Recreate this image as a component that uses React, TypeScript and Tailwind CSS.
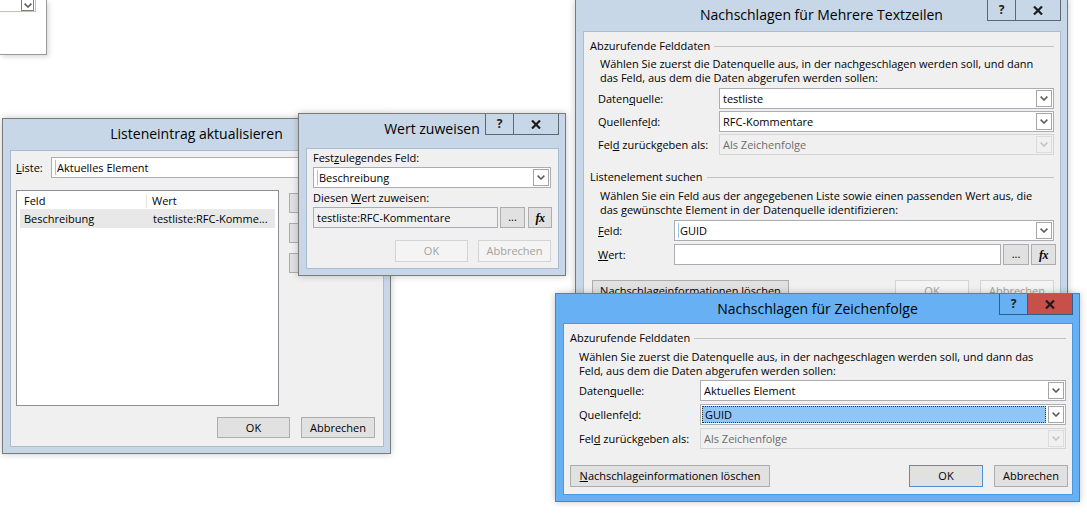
import React from "react";

function Chevron({ muted = false }: { muted?: boolean }) {
  return (
    <svg width="8" height="5" viewBox="0 0 8 5">
      <path d="M0.6 0.6 L4 4 L7.4 0.6" fill="none" stroke={muted ? "#c4c4c4" : "#5a5a5a"} strokeWidth="1.5" />
    </svg>
  );
}

function XGlyph() {
  return (
    <svg width="10" height="9" viewBox="0 0 10 9">
      <path d="M1 0.5 L9 8.5 M9 0.5 L1 8.5" stroke="#1c1c1c" strokeWidth="2.2" />
    </svg>
  );
}

function Caption({ active }: { active: boolean }) {
  return (
    <div className={`absolute top-0 right-[6px] flex h-[21px] border-l border-r border-b ${active ? "border-[#2f5f8e]" : "border-[#5c6772]"}`}>
      <div className={`w-[28px] flex items-center justify-center border-r font-bold text-[12px] text-[#1c1c1c] ${active ? "border-[#2f5f8e]" : "border-[#5c6772]"}`}>
        ?
      </div>
      <div className={`w-[44px] flex items-center justify-center ${active ? "bg-[#c7504b]" : ""}`}>
        <XGlyph />
      </div>
    </div>
  );
}

function Win({
  pos,
  bar,
  title,
  active = false,
  children,
}: {
  pos: string;
  bar: string;
  title: string;
  active?: boolean;
  children: React.ReactNode;
}) {
  return (
    <div
      className={`absolute flex flex-col border shadow-[0_0_7px_rgba(0,0,0,0.22)] ${
        active ? "border-[#3f86cb] bg-[#66b0f3]" : "border-[#7a7a7a] bg-[#c7d7e7]"
      } ${pos}`}
    >
      <div className={`relative shrink-0 flex justify-center pt-[5px] ${bar}`}>
        <span className="text-[14px] leading-[20px] text-black">{title}</span>
        <Caption active={active} />
      </div>
      <div
        className={`relative flex-1 min-h-0 overflow-hidden ml-[7px] mr-[6px] mb-[6px] border bg-[#f0f0f0] ${
          active ? "border-[#4d98dd]" : "border-[#aabdd0]"
        }`}
      >
        {children}
      </div>
    </div>
  );
}

function Combo({
  value,
  className,
  disabled = false,
  selected = false,
  caret = false,
}: {
  value: string;
  className: string;
  disabled?: boolean;
  selected?: boolean;
  caret?: boolean;
}) {
  return (
    <div
      className={`flex items-center h-[21px] border ${
        disabled ? "border-[#d5d5d5] bg-[#f0f0f0] text-[#6d6d6d]" : "border-[#abadb3] bg-white"
      } ${className}`}
    >
      <div className="flex-1 min-w-0 h-full flex items-center p-[1px]">
        {selected ? (
          <div className="flex-1 h-full flex items-center pl-[2px] bg-[#8fc6f6] border border-dotted border-[#333]">
            {value}
          </div>
        ) : (
          <div className="flex items-center h-full pl-[2px]">
            {caret && <span className="w-px h-[15px] bg-[#9dc3e8] mr-[1px]" />}
            {value}
          </div>
        )}
      </div>
      <div
        className={`w-[16px] h-[17px] mr-[1px] ml-[1px] border flex items-center justify-center ${
          disabled ? "border-[#dcdcdc]" : "border-[#a6a6a6]"
        }`}
      >
        <Chevron muted={disabled} />
      </div>
    </div>
  );
}

function TextBox({
  value = "",
  className,
  readOnly = false,
  caret = false,
}: {
  value?: string;
  className: string;
  readOnly?: boolean;
  caret?: boolean;
}) {
  return (
    <div
      className={`flex items-center h-[21px] border border-[#abadb3] pl-[3px] ${readOnly ? "bg-[#f0f0f0]" : "bg-white"} ${className}`}
    >
      {caret && <span className="w-px h-[15px] bg-[#9dc3e8] mr-[1px]" />}
      {value}
    </div>
  );
}

function Btn({
  children,
  className,
  disabled = false,
  def = false,
}: {
  children?: React.ReactNode;
  className: string;
  disabled?: boolean;
  def?: boolean;
}) {
  return (
    <div
      className={`flex items-center justify-center border ${
        disabled
          ? "border-[#d4d4d4] bg-[#f4f4f4] text-[#a3a3a3]"
          : def
          ? "border-[#4f8fd0] bg-[#e1e1e1]"
          : "border-[#adadad] bg-[#e1e1e1]"
      } ${className}`}
    >
      {children}
    </div>
  );
}

function SmallBtns({ dots, fx }: { dots: string; fx: string }) {
  return (
    <>
      <Btn className={`h-[21px] items-end pb-[3px] ${dots}`}>...</Btn>
      <Btn className={`h-[21px] ${fx}`}>
        <span className="font-['Liberation_Serif',serif] italic font-bold text-[12px] tracking-[-0.5px]">fx</span>
      </Btn>
    </>
  );
}

function Group({ label, className }: { label: string; className: string }) {
  return (
    <div className={`flex items-center h-[14px] ${className}`}>
      <span>{label}</span>
      <div className="flex-1 ml-[4px] h-0 border-t border-[#c2c2c2]" />
    </div>
  );
}

function Fragment() {
  return (
    <div className="absolute left-0 top-0 w-[47px] h-[55px] bg-white border-r border-b border-[#9a9a9a] shadow-[2px_2px_5px_rgba(0,0,0,0.15)]">
      <div className="flex justify-end w-[36px] h-[12px] border-b border-r border-[#a9c6e3]">
        <div className="w-[13px] h-[11px] mr-[1px] border-l border-r border-b border-[#7e7e7e] flex items-center justify-center">
          <Chevron />
        </div>
      </div>
    </div>
  );
}

function WinA() {
  return (
    <Win pos="left-[2px] top-[118px] w-[389px] h-[336px]" bar="h-[31px]" title="Listeneintrag aktualisieren">
      <div className="flex flex-col pl-[5px] pr-[8px]">
        <div className="mt-[6px] flex items-center h-[21px]">
          <span className="w-[35px]">
            <u>L</u>iste:
          </span>
          <TextBox className="flex-1" value="Aktuelles Element" caret />
        </div>
        <div className="mt-[12px] flex">
          <div className="w-[263px] h-[216px] border border-[#8c8e94] bg-white pt-[2px] px-[3px]">
            <div className="flex h-[17px] items-center border-b border-[#eaeaea]">
              <span className="w-[127px] pl-[4px] border-r border-[#e3e3e3]">Feld</span>
              <span className="pl-[5px]">Wert</span>
            </div>
            <div className="flex h-[18px] items-center bg-[#e8e8e8]">
              <span className="w-[127px] pl-[4px]">Beschreibung</span>
              <span className="pl-[6px]">testliste:RFC-Komme...</span>
            </div>
          </div>
          <div className="ml-[10px] flex-1 flex flex-col gap-[10px] pt-[3px]">
            <Btn className="h-[20px]" />
            <Btn className="h-[20px]" />
            <Btn className="h-[20px]" />
          </div>
        </div>
        <div className="mt-[11px] flex justify-end gap-[11px]">
          <Btn className="w-[73px] h-[21px]">OK</Btn>
          <Btn className="w-[74px] h-[21px]">Abbrechen</Btn>
        </div>
      </div>
    </Win>
  );
}

function WinB() {
  return (
    <Win pos="left-[298px] top-[113px] w-[268px] h-[163px]" bar="h-[34px]" title="Wert zuweisen">
      <div className="flex flex-col pl-[6px]">
        <div className="mt-[2px] h-[14px]">
          Fest<u>z</u>ulegendes Feld:
        </div>
        <Combo className="mt-[2px] w-[238px]" value="Beschreibung" caret />
        <div className="mt-[3px] h-[14px]">
          Diesen <u>W</u>ert zuweisen:
        </div>
        <div className="mt-[2px] flex">
          <TextBox className="w-[185px]" value="testliste:RFC-Kommentare" readOnly />
          <SmallBtns dots="ml-[2px] w-[25px]" fx="ml-[3px] w-[24px]" />
        </div>
        <div className="mt-[12px] w-[238px] flex justify-end gap-[10px]">
          <Btn className="w-[73px] h-[22px]" disabled>
            OK
          </Btn>
          <Btn className="w-[73px] h-[22px]" disabled>
            Abbrechen
          </Btn>
        </div>
      </div>
    </Win>
  );
}

function Row({ label, children, lw }: { label: React.ReactNode; children: React.ReactNode; lw: string }) {
  return (
    <div className="flex items-center">
      <span className={lw}>{label}</span>
      {children}
    </div>
  );
}

function WinC() {
  return (
    <Win pos="left-[575px] top-[-1px] w-[493px] h-[322px]" bar="h-[31px]" title="Nachschlagen für Mehrere Textzeilen">
      <div className="flex flex-col">
        <Group className="mt-[7px] ml-[6px] w-[464px]" label="Abzurufende Felddaten" />
        <div className="mt-[4px] pl-[16px]">
          Wählen Sie zuerst die Datenquelle aus, in der nachgeschlagen werden soll, und dann
          <br />
          das Feld, aus dem die Daten abgerufen werden sollen:
        </div>
        <div className="mt-[3px] pl-[14px] flex flex-col gap-[2px]">
          <Row lw="w-[121px]" label={<>Daten<u>q</u>uelle:</>}>
            <Combo className="w-[335px]" value="testliste" />
          </Row>
          <Row lw="w-[121px]" label={<>Quellenfe<u>l</u>d:</>}>
            <Combo className="w-[335px]" value="RFC-Kommentare" />
          </Row>
          <Row lw="w-[121px]" label={<>Fel<u>d</u> zurückgeben als:</>}>
            <Combo className="w-[335px]" value="Als Zeichenfolge" disabled />
          </Row>
        </div>
        <Group className="mt-[15px] ml-[6px] w-[464px]" label="Listenelement suchen" />
        <div className="mt-[5px] pl-[16px]">
          Wählen Sie ein Feld aus der angegebenen Liste sowie einen passenden Wert aus, die
          <br />
          das gewünschte Element in der Datenquelle identifizieren:
        </div>
        <div className="mt-[3px] pl-[14px] flex flex-col gap-[3px]">
          <Row lw="w-[76px]" label={<><u>F</u>eld:</>}>
            <Combo className="w-[380px]" value="GUID" caret />
          </Row>
          <Row lw="w-[76px]" label={<><u>W</u>ert:</>}>
            <TextBox className="w-[327px]" />
            <SmallBtns dots="ml-[2px] w-[26px]" fx="ml-[2px] w-[25px]" />
          </Row>
        </div>
        <div className="mt-[15px] pl-[8px] flex">
          <Btn className="w-[197px] h-[22px]">
            <span>
              Nachschlageinformationen löschen
            </span>
          </Btn>
          <Btn className="ml-[106px] w-[74px] h-[22px]" disabled>
            OK
          </Btn>
          <Btn className="ml-[11px] w-[74px] h-[22px]" disabled>
            Abbrechen
          </Btn>
        </div>
      </div>
    </Win>
  );
}

function WinD() {
  return (
    <Win pos="left-[555px] top-[293px] w-[525px] h-[209px]" bar="h-[29px]" title="Nachschlagen für Zeichenfolge" active>
      <div className="flex flex-col">
        <Group className="mt-[7px] ml-[6px] w-[496px]" label="Abzurufende Felddaten" />
        <div className="mt-[5px] pl-[15px]">
          Wählen Sie zuerst die Datenquelle aus, in der nachgeschlagen werden soll, und dann das
          <br />
          Feld, aus dem die Daten abgerufen werden sollen:
        </div>
        <div className="mt-[2px] pl-[15px] flex flex-col gap-[3px]">
          <Row lw="w-[121px]" label={<>Daten<u>q</u>uelle:</>}>
            <Combo className="w-[366px]" value="Aktuelles Element" />
          </Row>
          <Row lw="w-[121px]" label={<>Quellenfe<u>l</u>d:</>}>
            <Combo className="w-[366px]" value="GUID" selected />
          </Row>
          <Row lw="w-[121px]" label={<>Fel<u>d</u> zurückgeben als:</>}>
            <Combo className="w-[366px]" value="Als Zeichenfolge" disabled />
          </Row>
        </div>
        <div className="mt-[16px] pl-[6px] flex">
          <Btn className="w-[200px] h-[22px]">
            <span>
              <u>N</u>achschlageinformationen löschen
            </span>
          </Btn>
          <Btn className="ml-[139px] w-[74px] h-[22px]" def>
            OK
          </Btn>
          <Btn className="ml-[11px] w-[74px] h-[22px]">Abbrechen</Btn>
        </div>
      </div>
    </Win>
  );
}

export default function App() {
  return (
    <div className="relative w-[1087px] h-[513px] overflow-hidden bg-white font-['Open_Sans',sans-serif] text-[11px] leading-[14px] text-black">
      <Fragment />
      <WinA />
      <WinB />
      <WinC />
      <WinD />
    </div>
  );
}
